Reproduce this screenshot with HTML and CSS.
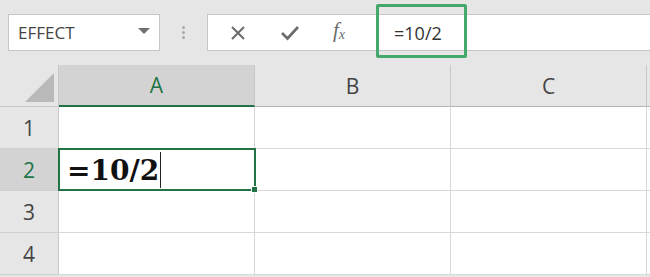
FILE: index.html
```html
<!DOCTYPE html>
<html lang="en">
<head>
  <meta charset="UTF-8" />
  <title>Formula bar</title>
  <link rel="stylesheet" href="styles.css">
</head>
<body>
  <div class="toolbar">
    <div class="name-box">
      <span>EFFECT</span>
      <span class="caret"></span>
    </div>
    <div class="grip"><i></i><i></i><i></i></div>
    <div class="formula-bar">
      <div class="fx-buttons">
        <svg width="18" height="18" viewBox="0 0 18 18"><path d="M3 3 L15 15 M15 3 L3 15" stroke="#6b6b6b" stroke-width="2" fill="none"/></svg>
        <svg width="20" height="18" viewBox="0 0 20 18"><path d="M2 9 L7.5 14.5 L18 3" stroke="#6b6b6b" stroke-width="2.6" fill="none"/></svg>
        <span class="fx">f<sub>x</sub></span>
      </div>
      <div class="formula-input">
        <span class="formula-text">=10/2</span>
      </div>
    </div>
  </div>

  <div class="sheet">
    <div class="corner"><span class="tri"></span></div>
    <div class="col-head active">A</div>
    <div class="col-head">B</div>
    <div class="col-head">C</div>
    <div class="col-head edge"></div>

    <div class="row-head">1</div>
    <div class="cell"></div><div class="cell"></div><div class="cell"></div><div class="cell edge"></div>

    <div class="row-head active">2</div>
    <div class="cell selected"><span class="entry">=10/2</span><span class="cursor"></span></div>
    <div class="cell"></div><div class="cell"></div><div class="cell edge"></div>

    <div class="row-head">3</div>
    <div class="cell"></div><div class="cell"></div><div class="cell"></div><div class="cell edge"></div>

    <div class="row-head">4</div>
    <div class="cell"></div><div class="cell"></div><div class="cell"></div><div class="cell edge"></div>
  </div>
</body>
</html>
```

FILE: styles.css
```css
body {
  margin: 0;
  width: 650px;
  height: 277px;
  overflow: hidden;
  background: #e6e6e6;
  font-family: 'Open Sans', 'Liberation Sans', sans-serif;
}

.toolbar {
  position: relative;
  height: 65px;
  display: flex;
  align-items: center;
  padding-left: 8px;
  box-sizing: border-box;
  background: #e6e6e6;
}

.name-box {
  width: 152px;
  height: 37px;
  box-sizing: border-box;
  background: #fff;
  border: 1px solid #c6c6c6;
  display: flex;
  align-items: center;
  justify-content: space-between;
  padding: 0 9px 0 9px;
  font-size: 17px;
  color: #444;
}

.caret {
  width: 0;
  height: 0;
  border-left: 6px solid transparent;
  border-right: 6px solid transparent;
  border-top: 6px solid #6f6f6f;
  margin-top: -3px;
}

.grip {
  width: 47px;
  display: flex;
  flex-direction: column;
  align-items: center;
  gap: 2px;
}

.grip i {
  width: 3px;
  height: 3px;
  border-radius: 50%;
  background: #a8a8a8;
}

.formula-bar {
  flex: 1;
  height: 37px;
  display: flex;
  background: #fff;
  border: 1px solid #c6c6c6;
  border-right: none;
  box-sizing: border-box;
}

.fx-buttons {
  width: 168px;
  display: flex;
  align-items: center;
  gap: 33px;
  padding-left: 21px;
  box-sizing: border-box;
}

.fx {
  font-family: 'Liberation Serif', serif;
  font-style: italic;
  font-size: 21px;
  color: #6b6b6b;
  margin-top: -4px;
}

.fx sub {
  font-size: 14px;
  vertical-align: -2px;
}

.formula-input {
  flex: 1;
  display: flex;
  align-items: center;
  padding-left: 18px;
}

.formula-text {
  font-size: 18px;
  color: #333;
}

.formula-text::after {
  content: "";
  position: absolute;
  left: 376px;
  top: 4px;
  width: 91px;
  height: 54px;
  border: 3px solid #44a86d;
  border-radius: 2px;
  box-sizing: border-box;
}

.sheet {
  display: grid;
  grid-template-columns: 59px 196px 196px 196px 3px;
  grid-template-rows: 42px 42px 42px 42px 42px;
  background: #fff;
}

.corner {
  background: #e6e6e6;
  border-right: 1px solid #c8c8c8;
  border-bottom: 1px solid #c8c8c8;
  display: flex;
  align-items: flex-end;
  justify-content: flex-end;
  padding: 0 4px 4px 0;
}

.tri {
  width: 0;
  height: 0;
  border-left: 29px solid transparent;
  border-bottom: 29px solid #b9b9b9;
}

.col-head {
  background: #e6e6e6;
  border-right: 1px solid #c8c8c8;
  border-bottom: 1px solid #b5b5b5;
  display: flex;
  align-items: center;
  justify-content: center;
  font-size: 21px;
  color: #444;
}

.col-head.active {
  background: #d3d3d3;
  color: #217346;
  border-bottom: 2px solid #217346;
}

.row-head {
  background: #e6e6e6;
  border-right: 1px solid #c8c8c8;
  border-bottom: 1px solid #cfcfcf;
  display: flex;
  align-items: center;
  justify-content: center;
  font-size: 21px;
  color: #444;
}

.row-head.active {
  background: #d3d3d3;
  color: #217346;
}

.cell {
  border-right: 1px solid #d8d8d8;
  border-bottom: 1px solid #d8d8d8;
}

.edge {
  border-right: none;
}

.cell.selected {
  position: relative;
  display: flex;
  align-items: center;
  padding-left: 8px;
}

.cell.selected::after {
  content: "";
  position: absolute;
  left: -1px;
  top: -1px;
  right: -2px;
  bottom: -1px;
  border: 2px solid #217346;
}

.cell.selected::before {
  content: "";
  position: absolute;
  right: -4px;
  bottom: -3px;
  width: 5px;
  height: 5px;
  background: #217346;
  border: 1px solid #fff;
  z-index: 1;
}

.entry {
  font-family: 'DejaVu Serif', serif;
  font-weight: bold;
  font-size: 28px;
  line-height: 1;
  color: #111;
  margin-top: 2px;
}

.cursor {
  width: 1px;
  height: 36px;
  background: #222;
  margin-left: 1px;
  margin-top: 0;
}
```
